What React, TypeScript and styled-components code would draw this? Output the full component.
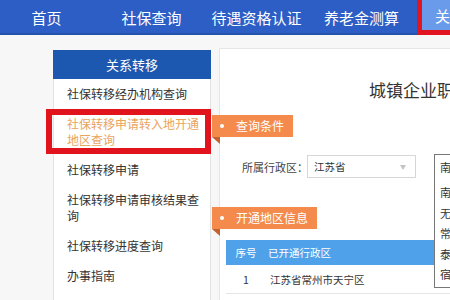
import styled, { createGlobalStyle } from 'styled-components';

const GlobalStyle = createGlobalStyle`
  html, body {
    margin: 0;
    padding: 0;
    width: 450px;
    height: 300px;
    overflow: hidden;
    background: #f7f7f8;
    font-family: "Noto Sans CJK SC", "Noto Sans", sans-serif;
  }
`;

const Page = styled.div`
  width: 450px;
  height: 300px;
  overflow: hidden;
`;

const NavBar = styled.nav`
  height: 33px;
  background: #2c5ec5;
  border-bottom: 2px solid #2451ab;
  display: flex;
`;

const NavList = styled.div`
  display: flex;
  margin-left: -6px;
  flex: none;
`;

const NavItem = styled.div<{ $active?: boolean }>`
  flex: none;
  width: 105px;
  height: 35px;
  line-height: 35px;
  box-sizing: border-box;
  color: #fff;
  font-size: 15px;
  text-align: ${p => (p.$active ? 'left' : 'center')};
  white-space: nowrap;
  ${p =>
    p.$active &&
    `
    margin-left: 3px;
    padding-left: 13px;
    background: #6a9beb;
    border: 5px solid #e01520;
    border-top: 0;
    line-height: 32px;
  `}
`;

const Body = styled.div`
  display: flex;
  align-items: flex-start;
  padding-top: 13px;
  padding-left: 53px;
  width: 800px;
`;

const Sidebar = styled.aside`
  flex: none;
  width: 158px;
  margin-top: 2px;
  background: #fff;
  box-sizing: border-box;
  border-left: 1px solid #e3e3e3;
  border-right: 1px solid #e3e3e3;
  height: 260px;
`;

const SideHeader = styled.div`
  height: 29px;
  line-height: 29px;
  background: #1c57b0;
  color: #fff;
  text-align: center;
  font-size: 13px;
  margin: 0 -1px;
`;

const SideItem = styled.div<{ $active?: boolean }>`
  position: relative;
  padding: 7px 8px 7px 13px;
  font-size: 12px;
  line-height: 16px;
  color: ${p => (p.$active ? '#e9a45e' : '#333')};
  ${p =>
    p.$active &&
    `
    &::after {
      content: '';
      position: absolute;
      left: -8px;
      right: -1px;
      top: 0;
      bottom: 1px;
      border: 6px solid #e1141d;
    }
  `}
`;

const Panel = styled.main`
  position: relative;
  flex: none;
  width: 420px;
  height: 260px;
  margin-left: 8px;
  background: #fff;
  border: 1px solid #e6e6e6;
`;

const Title = styled.h1`
  margin: 0;
  padding: 29px 0 0 149px;
  font-size: 17px;
  font-weight: normal;
  line-height: 24px;
  color: #333;
  white-space: nowrap;
`;

const Ribbon = styled.div<{ $top: number }>`
  position: relative;
  width: fit-content;
  margin: ${p => p.$top}px 0 0 -8px;
  height: 22px;
  line-height: 22px;
  padding: 0 9px 0 24px;
  background: #f48b4d;
  color: #fff;
  font-size: 12px;
  white-space: nowrap;

  &::before {
    content: '';
    position: absolute;
    left: 8px;
    top: 9px;
    width: 4px;
    height: 4px;
    border-radius: 50%;
    background: #fff;
  }

  &::after {
    content: '';
    position: absolute;
    left: 0;
    top: 100%;
    border-top: 7px solid #c4612c;
    border-left: 8px solid transparent;
  }
`;

const FormRow = styled.div`
  display: flex;
  align-items: center;
  margin-top: 18px;
  padding-left: 22px;
  height: 23px;
`;

const Label = styled.span`
  width: 65px;
  font-size: 11px;
  color: #444;
  white-space: nowrap;
`;

const Select = styled.div`
  position: relative;
  width: 109px;
  height: 23px;
  line-height: 22px;
  box-sizing: border-box;
  border: 1px solid #d6d6d6;
  padding-left: 6px;
  font-size: 10.5px;
  color: #333;

  &::after {
    content: '';
    position: absolute;
    right: 9px;
    top: 9px;
    border-top: 5px solid #c4c4c4;
    border-left: 3px solid transparent;
    border-right: 3px solid transparent;
  }
`;

const Dropdown = styled.div`
  position: absolute;
  left: 214px;
  top: 105px;
  width: 120px;
  background: #fff;
  border: 1px solid #777;
  z-index: 2;
  font-size: 11px;
  color: #333;
`;

const DropField = styled.div`
  height: 25px;
  line-height: 25px;
  padding-left: 5px;
`;

const DropList = styled.div`
  padding: 2px 0;
`;

const DropOption = styled.div`
  height: 20.5px;
  line-height: 20.5px;
  padding-left: 5px;
`;

const Table = styled.div`
  margin: 11px 7px 0 6px;
  font-size: 10.5px;
`;

const Row = styled.div<{ $head?: boolean }>`
  display: flex;
  align-items: center;
  height: ${p => (p.$head ? 25 : 28)}px;
  background: ${p => (p.$head ? '#4fa2ea' : '#fff')};
  color: ${p => (p.$head ? '#fff' : '#333')};
  border-bottom: ${p => (p.$head ? 'none' : '1px solid #e6e6e6')};
`;

const IndexCell = styled.div`
  width: 40px;
  text-align: center;
`;

const NameCell = styled.div<{ $head?: boolean }>`
  padding-left: ${p => (p.$head ? 2 : 4)}px;
`;

const navItems = ['首页', '社保查询', '待遇资格认证', '养老金测算'];

const sideItems = [
  '社保转移经办机构查询',
  '社保转移申请转入地开通地区查询',
  '社保转移申请',
  '社保转移申请审核结果查询',
  '社保转移进度查询',
  '办事指南',
];

const cities = ['南京市', '无锡市', '常州市', '泰州市', '宿迁市'];

export default function App() {
  return (
    <Page>
      <GlobalStyle />
      <NavBar>
        <NavList>
          {navItems.map(n => (
            <NavItem key={n}>{n}</NavItem>
          ))}
          <NavItem $active>关系转移</NavItem>
        </NavList>
      </NavBar>
      <Body>
        <Sidebar>
          <SideHeader>关系转移</SideHeader>
          {sideItems.map((s, i) => (
            <SideItem key={s} $active={i === 1}>
              {s}
            </SideItem>
          ))}
        </Sidebar>
        <Panel>
          <Title>城镇企业职工基本养老保险关系转移</Title>
          <Ribbon $top={13}>查询条件</Ribbon>
          <FormRow>
            <Label>所属行政区：</Label>
            <Select>江苏省</Select>
          </FormRow>
          <Dropdown>
            <DropField>南京市</DropField>
            <DropList>
              {cities.map(c => (
                <DropOption key={c}>{c}</DropOption>
              ))}
            </DropList>
          </Dropdown>
          <Ribbon $top={29}>开通地区信息</Ribbon>
          <Table>
            <Row $head>
              <IndexCell>序号</IndexCell>
              <NameCell $head>已开通行政区</NameCell>
            </Row>
            <Row>
              <IndexCell>1</IndexCell>
              <NameCell>江苏省常州市天宁区</NameCell>
            </Row>
          </Table>
        </Panel>
      </Body>
    </Page>
  );
}
